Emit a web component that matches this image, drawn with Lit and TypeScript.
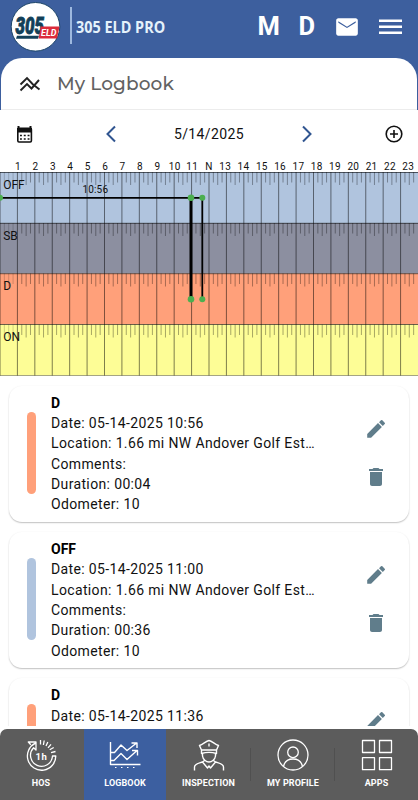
import { LitElement, html, svg, css } from "lit";
import { customElement, property } from "lit/decorators.js";
import { styleMap } from "lit/directives/style-map.js";

const HOUR = 418 / 24;
const ROWS = [
  { label: "OFF", y: 0, h: 51, fill: "#b0c4de" },
  { label: "SB", y: 51, h: 50.5, fill: "#8c8fa0" },
  { label: "D", y: 101.5, h: 51, fill: "#ffa07a" },
  { label: "ON", y: 152.5, h: 51, fill: "#fdfd96" },
];
const ENTRIES = [
  { status: "D", date: "05-14-2025 10:56", duration: "00:04", color: "#ffa07a" },
  { status: "OFF", date: "05-14-2025 11:00", duration: "00:36", color: "#b0c4de" },
  { status: "D", date: "05-14-2025 11:36", duration: "00:24", color: "#ffa07a" },
];

@customElement("duty-graph")
class DutyGraph extends LitElement {
  static styles = css`
    :host { display: block; height: 218px; }
    svg { display: block; font-family: Roboto, sans-serif; }
    .hour { font-size: 10px; letter-spacing: 0.3px; text-anchor: middle; fill: #111; }
    .row { font-size: 12px; fill: #111; }
    .span { font-size: 10px; fill: #111; }
  `;
  render() {
    const hours = Array.from({ length: 23 }, (_, i) => i + 1);
    const labelX = (h: number) => (h < 12 ? h * HOUR + 0.6 : h === 12 ? 209 : 225.2 + (h - 13) * 18.3);
    return html`<svg width="418" height="218" viewBox="0 0 418 218">
      ${hours.map((h) => svg`<text class="hour" x=${labelX(h)} y="11.5">${h === 12 ? "N" : h}</text>`)}
      <g transform="translate(0 14)">
        ${ROWS.map((r) => svg`<rect x="0" y=${r.y} width="418" height=${r.h} fill=${r.fill}/>`)}
        ${ROWS.map((r) =>
          Array.from({ length: 96 }, (_, i) => i).filter((i) => i % 4).map((i) => svg`
            <line x1=${(i * HOUR) / 4} x2=${(i * HOUR) / 4} y1=${r.y} y2=${r.y + (i % 4 === 2 ? 13 : 10.5)}
              stroke="#000" stroke-opacity=${i < 4 ? 0.2 : 0.38} stroke-width=".9"/>`))}
        ${hours.map((h) => svg`<line x1=${h * HOUR} x2=${h * HOUR} y1="0" y2="203.5" stroke="#000" stroke-opacity=".5"/>`)}
        ${[0.5, 51.3, 101.7, 152.5].map((y) => svg`<line x1="0" x2="418" y1=${y} y2=${y} stroke="#000" stroke-opacity=".58"/>`)}
        <line x1="0" x2="418" y1="203.5" y2="203.5" stroke="#000" stroke-opacity=".35"/>
        <line x1=".4" x2=".4" y1="0" y2="203.5" stroke="#000" stroke-opacity=".3"/>
        ${ROWS.map((r) => svg`<text class="row" x="3.2" y=${r.y + 16.5}>${r.label}</text>`)}
        <text class="span" x="82.5" y="20.6" textLength="25.5">10:56</text>
        <path d="M0 25.8H202.3" stroke="#000" stroke-width="1.7"/>
        <path d="M191 25.8V127" stroke="#000" stroke-width="3"/>
        <path d="M202.3 25.8V127" stroke="#000" stroke-width="1.8"/>
        <g fill="#4caf50">
          <circle cx="0" cy="25.8" r="3"/><circle cx="191" cy="25.8" r="3.3"/><circle cx="202.3" cy="25.8" r="3"/>
          <circle cx="191" cy="127.2" r="3.3"/><circle cx="202.3" cy="127.2" r="3"/>
        </g>
      </g>
    </svg>`;
  }
}

@customElement("log-card")
class LogCard extends LitElement {
  @property({ attribute: false }) entry = ENTRIES[0];
  static styles = css`
    :host { display: flex; box-sizing: border-box; height: 136px; flex: none; align-items: center;
      padding: 0 18px; background: #fff; border-radius: 13px; box-shadow: 0 1px 1.5px #0000003d, 0 0 3px #00000006; }
    .bar { width: 8.5px; height: 82px; border-radius: 5px; margin-right: 15.5px; margin-top: -2px; flex: none; }
    .text { flex: 1; font: 14px/20.3px Roboto, sans-serif; letter-spacing: 0.36px; color: #111; white-space: nowrap; margin-top: -0.5px; }
    .status { font-weight: 700; letter-spacing: 0; color: #000; }
    .actions { display: flex; flex-direction: column; gap: 24px; margin-right: 3px; margin-top: -2.5px; fill: #607d8b; }
    svg { display: block; }
  `;
  render() {
    const e = this.entry;
    return html`<div class="bar" style=${styleMap({ background: e.color })}></div>
      <div class="text">
        <div class="status">${e.status}</div>
        <div>Date: ${e.date}</div>
        <div>Location: 1.66 mi NW Andover Golf Est…</div>
        <div>Comments:</div>
        <div>Duration: ${e.duration}</div>
        <div>Odometer: 10</div>
      </div>
      <div class="actions">
        <svg width="24" height="24" viewBox="0 0 24 24"><path d="M3.200 16.900V20.800h3.900L17.900 10l-3.900-3.900L3.200 16.900zM20.700 7.100a1 1 0 0 0 0-1.410l-2.340-2.340a1 1 0 0 0-1.410 0l-1.900 1.850 3.750 3.750 1.900-1.850z"/></svg>
        <svg width="24" height="24" viewBox="0 0 24 24"><path d="M6 19c0 1.100.9 2 2 2h8c1.100 0 2-.9 2-2V7H6v12zM19 4h-3.500l-1-1h-5l-1 1H5v2h14V4z"/></svg>
      </div>`;
  }
}

const TABS = [
  { label: "HOS", icon: svg`<path d="M10.500 4.200A14.200 14.200 0 1 0 30.800 17H27.500A11 11 0 1 1 8.600 8.700L11 11V3H3.300l2.500 2.800" stroke-width="1.300"/>
      <path d="M15.500 1v4.500M19.200 1.500l-.8 4.500M22.800 3l-1.800 4M26 5.300l-3 3.500M28.700 8.500l-4 2.300M30.500 12.500l-4.500 1.200" stroke-width="1.300"/>
      <text class="one" x="10.500" y="20.500" textLength="11.500">1h</text>` },
  { label: "LOGBOOK", icon: svg`<path d="M1.500 3v22.500H31.500M2 13.500h3.500L12 6l6 5.500L27 4.500M22.500 4H28v5M2 21.500h3l7-7 6 6 9.500-8.500M23 11.500h5.500v5" stroke-width="1.400"/>
      <path d="M6 28.500h22" stroke-width="1" stroke-dasharray="1.500 4.500"/>` },
  { label: "INSPECTION", icon: svg`<path d="M6.500 6.500C10 5.500 13 2 16 1.500c3 .5 6 4 9.500 5L23.500 11h-15zM8.500 11v3.500c5-1.500 10-1.500 15 0V11M9.500 14v3c.5 3.500 3.500 6 6.500 6s6-2.500 6.500-6v-3M11.500 21.500L9.500 23l5 6 1.500-2 1.500 2 5-6-2-1.500M9.500 23C5 24.500 1.500 25 1.500 28v3.500M22.500 23c4.500 1.500 8 2 8 5v3.500M16 4.500v3" stroke-width="1.400"/>` },
  { label: "MY PROFILE", icon: svg`<circle cx="16" cy="16" r="15" stroke-width="1.300"/><circle cx="16" cy="13.300" r="5.300" stroke-width="1.300"/><path d="M6.500 27.500c1-5 5-7.500 9.500-7.500s8.500 2.500 9.500 7.500" stroke-width="1.300"/>` },
  { label: "APPS", icon: svg`<path d="M1.500 1.500h12v12h-12zM18.500 1.500h12v12h-12zM1.500 18.700h12v12h-12zM18.500 18.700h12v12h-12z" stroke-width="1.300"/>` },
];

@customElement("app-root")
class AppRoot extends LitElement {
  static styles = css`
    :host { display: flex; flex-direction: column; width: 418px; height: 800px; overflow: hidden; background: #fff; font-family: Roboto, sans-serif; color: #111; }
    svg { display: block; flex: none; }
    .top { background: #3d5f9e; height: 110px; display: flex; flex-direction: column; flex: none; }
    .bar { height: 58px; display: flex; align-items: center; box-sizing: border-box; padding: 0 14px 5px 10px; color: #fff; }
    .rule { width: 1.5px; height: 37px; background: #9eb9df; margin: -2px 4.5px 0 9px; flex: none; }
    .brand { font: 700 15.5px "Open Sans", "Noto Sans", sans-serif; color: #e5f2fb; flex: 1; }
    .brand span { display: inline-block; transform: scaleX(.93); transform-origin: left; white-space: nowrap; }
    .letter { font-weight: 700; font-size: 25.5px; line-height: 52px; margin-top: -1px; }
    .m { margin-right: 18.5px; } .d { margin-right: 19px; }
    .mail { margin-right: 15px; }
    .logo3 { font: italic 900 19px Roboto, sans-serif; fill: #123f58; stroke: #123f58; stroke-width: .7px; }
    .logoE { font: italic 700 9px Roboto, sans-serif; fill: #fff; }
    .sheet { flex: 1; background: #fff; border-radius: 21px 21px 0 0; display: flex; align-items: center; padding-left: 17px; gap: 15px; border-bottom: 1px solid #ececec; margin: 0 1px; }
    .title { font: 500 18.5px Montserrat, Inter, sans-serif; color: #626262; letter-spacing: .1px; }
    .dates { height: 48px; display: flex; align-items: center; justify-content: space-between; padding: 0 12px 0 13px; flex: none; }
    .mid { display: flex; align-items: center; justify-content: space-between; width: 220px; }
    .date { font-size: 14px; letter-spacing: .4px; }
    .list { flex: none; height: 350px; box-sizing: border-box; padding: 10px 9px 0; display: flex; flex-direction: column; gap: 10.2px; overflow: hidden; }
    .nav { margin-top: 3px; flex: none; height: 71px; background: #5c5c5c; border-radius: 7px 7px 0 0; display: grid; grid-template-columns: 84px 82px 85px 84px 83px; overflow: hidden; }
    .tab { position: relative; display: flex; flex-direction: column; align-items: center; padding-top: 10px; box-sizing: border-box; color: #fff; font-size: 9px; font-weight: 700; letter-spacing: .12px; gap: 6.5px; line-height: 11px; white-space: nowrap; }
    .tab svg { fill: none; stroke: #fff; stroke-linejoin: round; }
    .tab:first-child { padding-right: 2px; }
    .one { font: 700 9.5px Roboto, sans-serif; fill: #fff; stroke: none; }
    .active { background: #3c5fa0; }
    .ruled::after { content: ""; position: absolute; right: 0; top: 19px; width: 1px; height: 33px; background: #505050; }
  `;
  render() {
    return html`
      <div class="top">
        <div class="bar">
          <svg width="51" height="51" viewBox="0 0 51 51">
            <circle cx="25.5" cy="25.8" r="24.3" fill="#fff" stroke="#1d4569" stroke-width="1"/>
            <text class="logo3" x="5.5" y="26.5" textLength="28.5" lengthAdjust="spacingAndGlyphs" transform="scale(1 1.25)">305</text>
            <path d="M7 34.800h22l-1 3H6z" fill="#123f58"/><path d="M31 25.500h18.500l-2.500 12H28.500z" fill="#db2b3b"/>
            <text class="logoE" x="31" y="35" textLength="15.5">ELD</text>
          </svg>
          <div class="rule"></div>
          <div class="brand"><span>305 ELD PRO</span></div>
          <div class="letter m">M</div><div class="letter d">D</div>
          <svg class="mail" width="26" height="26" viewBox="0 0 24 24" fill="#fff"><path d="M20 4H4c-1.100 0-2 .9-2 2v12c0 1.100.9 2 2 2h16c1.100 0 2-.9 2-2V6c0-1.100-.9-2-2-2zm0 4l-8 5-8-5V6.800l8 5 8-5v1.200z"/></svg>
          <svg width="29" height="18" viewBox="0 0 29 18" fill="#fff"><path d="M4 1.500h23v2.600H4zM4 7.500h23v2.600H4zM4 13.500h23v2.600H4z"/></svg>
        </div>
        <div class="sheet">
          <svg width="24" height="24" viewBox="0 0 24 24" fill="none" stroke="#222" stroke-width="1.9"><path d="M2.500 12.500L9 6l5.500 6 7 5.500M2.500 18.500L9 12l4.500 4.500L21 8"/></svg>
          <div class="title">My Logbook</div>
        </div>
      </div>
      <div class="dates">
        <svg width="23" height="24" viewBox="0 0 23 24"><path d="M5.500 4v2M17.500 4v2" stroke="#111" stroke-width="2"/><rect x="4.800" y="6.400" width="13.600" height="13.600" rx="1.200" fill="#fff" stroke="#111" stroke-width="1.600"/><path d="M4 6h15v4.500H4z" fill="#111"/><path d="M7 13.500h9.500M7 17h9.500" stroke="#111" stroke-width="1.700" stroke-dasharray="1.900 1.900"/></svg>
        <div class="mid">
          <svg width="24" height="24" viewBox="0 0 24 24" fill="none" stroke="#305590" stroke-width="2"><path d="M16 4.500L8.500 12l7.500 7.500"/></svg>
          <div class="date">5/14/2025</div>
          <svg width="24" height="24" viewBox="0 0 24 24" fill="none" stroke="#305590" stroke-width="2"><path d="M8 4.500l7.500 7.500L8 19.500"/></svg>
        </div>
        <svg width="24" height="24" viewBox="0 0 24 24" fill="none" stroke="#111" stroke-width="1.6"><circle cx="12" cy="12" r="7.8"/><path d="M12 8v8M8 12h8"/></svg>
      </div>
      <duty-graph></duty-graph>
      <div class="list">${ENTRIES.map((e) => html`<log-card .entry=${e}></log-card>`)}</div>
      <div class="nav">
        ${TABS.map((t, i) => html`<div class="tab ${i === 1 ? "active" : i === 2 || i === 3 ? "ruled" : ""}"><svg width="32" height="32" viewBox="0 0 32 32">${t.icon}</svg>${t.label}</div>`)}
      </div>`;
  }
}
